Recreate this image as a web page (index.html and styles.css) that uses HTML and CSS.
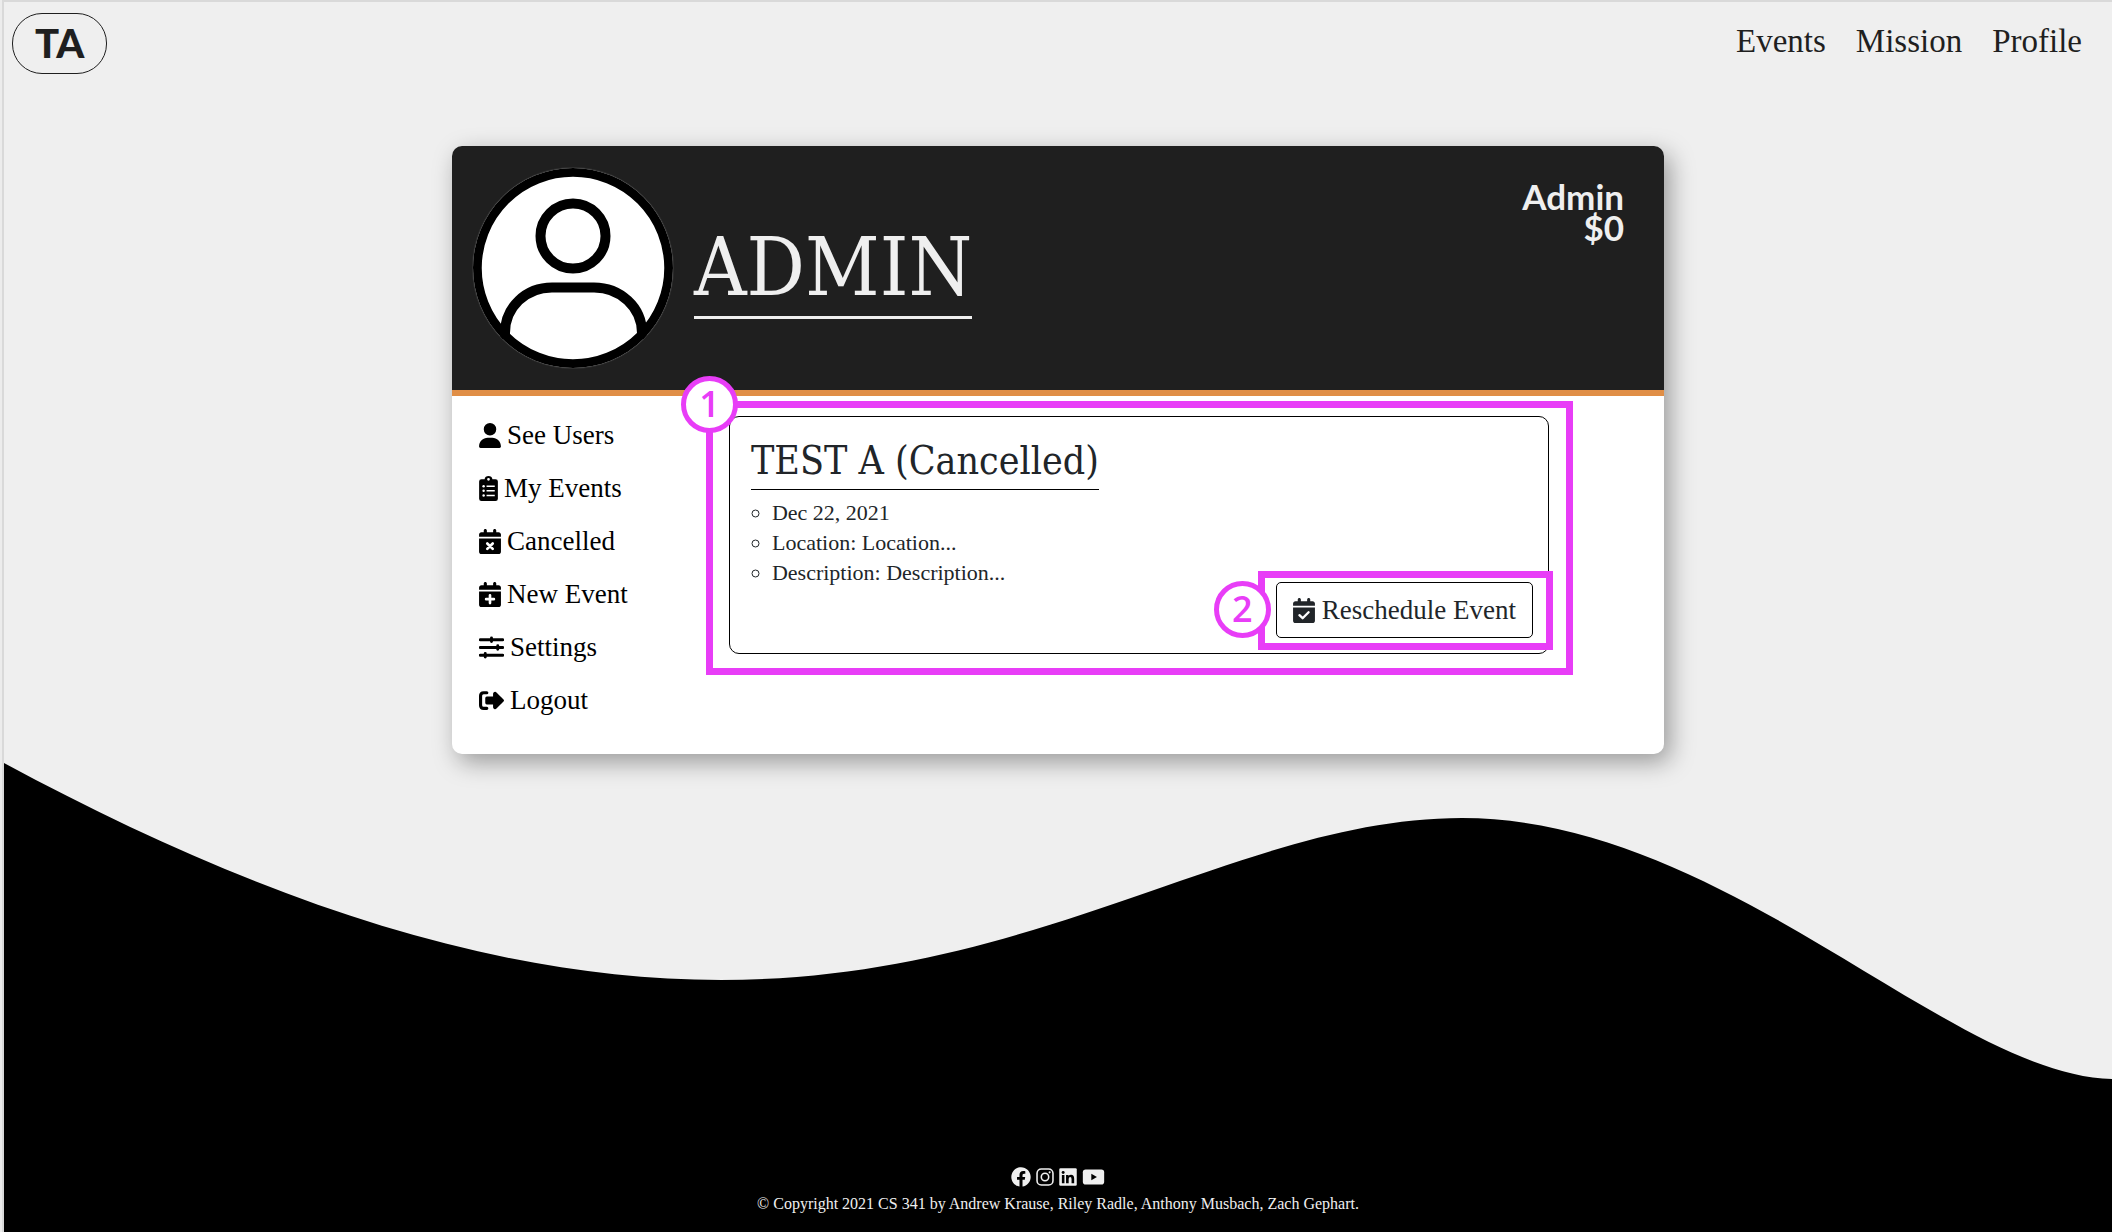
FILE: index.html
```html
<!DOCTYPE html>
<html lang="en">
<head>
<meta charset="utf-8">
<meta name="viewport" content="width=device-width, initial-scale=1">
<title>TA - Admin profile</title>
<link rel="stylesheet" href="styles.css">
</head>
<body>
<svg class="sprite" aria-hidden="true">
  <symbol id="calendar" viewBox="0 0 448 512"><path d="M128 0c17.700 0 32 14.300 32 32V64H288V32c0-17.700 14.300-32 32-32s32 14.300 32 32V64h48c26.500 0 48 21.500 48 48v48H0V112C0 85.500 21.500 64 48 64H96V32c0-17.700 14.300-32 32-32zM0 192H448V464c0 26.500-21.500 48-48 48H48c-26.500 0-48-21.500-48-48V192z"/></symbol>
</svg>
<div class="page">
  <svg class="wave" viewBox="4 763 2108 469" preserveAspectRatio="none" aria-hidden="true">
    <path d="M4 763C240 890 480 980 721 980C1040 980 1240 818 1462 818C1725 818 1950 1076 2112 1079V1232H4Z"/>
  </svg>

  <header class="topbar">
    <a class="logo" href="#">TA</a>
    <nav class="nav">
      <a href="#">Events</a>
      <a href="#">Mission</a>
      <a href="#">Profile</a>
    </nav>
  </header>

  <main class="card">
    <div class="card-head">
      <svg class="avatar" viewBox="0 0 202 202" role="img" aria-label="Profile picture">
        <clipPath id="face"><circle cx="101" cy="101" r="100"/></clipPath>
        <circle cx="101" cy="101" r="100" fill="#fff"/>
        <g fill="none" stroke="#000" clip-path="url(#face)">
          <circle cx="101" cy="69" r="32.500" stroke-width="10"/>
          <path d="M33 172V166C33 140 54 120.500 80 120.500H122C148 120.500 170 140 170 166V172" stroke-width="10"/>
          <circle cx="101" cy="101" r="96" stroke-width="9.500"/>
        </g>
        <circle cx="101" cy="101" r="100.500" fill="none" stroke="#444" stroke-width="0.500"/>
      </svg>
      <h1 class="name">ADMIN</h1>
      <div class="account">Admin<br>$0</div>
    </div>

    <div class="card-body">
      <nav class="menu">
        <a href="#"><svg class="icon w22" viewBox="0 0 448 512"><path d="M224 256A128 128 0 1 0 224 0a128 128 0 1 0 0 256zm-45.700 48C79.800 304 0 383.800 0 482.300C0 498.700 13.300 512 29.700 512H418.300c16.400 0 29.700-13.300 29.700-29.700C448 383.800 368.200 304 269.700 304H178.300z"/></svg>See Users</a>
        <a href="#"><svg class="icon w19" viewBox="0 0 384 512"><path fill-rule="evenodd" d="M48 64H112C116 26 150 0 192 0S268 26 272 64H336Q384 64 384 112V464Q384 512 336 512H48Q0 512 0 464V112Q0 64 48 64ZM192 40a28 28 0 1 0 0 56a28 28 0 1 0 0-56Z"/><path d="M152 208H320M152 304H320M152 400H320" stroke="#fff" stroke-width="30"/><g fill="#fff"><circle cx="92" cy="208" r="25"/><circle cx="92" cy="304" r="25"/><circle cx="92" cy="400" r="25"/></g></svg>My Events</a>
        <a href="#"><svg class="icon w22" viewBox="0 0 448 512"><use href="#calendar"/><path d="M168 296L280 408M280 296L168 408" stroke="#fff" stroke-width="54" stroke-linecap="round"/></svg>Cancelled</a>
        <a href="#"><svg class="icon w22" viewBox="0 0 448 512"><use href="#calendar"/><path d="M224 272V432M144 352H304" stroke="#fff" stroke-width="54" stroke-linecap="round"/></svg>New Event</a>
        <a href="#"><svg class="icon w25" viewBox="0 0 512 512"><path d="M24 96H488M24 256H488M24 416H488M256 60V132M384 220V292M128 380V452" stroke="#000" stroke-width="60" stroke-linecap="round"/></svg>Settings</a>
        <a href="#"><svg class="icon w25" viewBox="0 0 512 512"><path d="M160 96H96Q32 96 32 160V352Q32 416 96 416H160" fill="none" stroke="#000" stroke-width="64" stroke-linecap="round"/><path d="M502 234L358 90Q336 70 312 84Q288 92 288 120V176H160Q128 176 128 208V304Q128 336 160 336H288V392Q288 420 312 428Q336 442 358 422L502 278Q522 256 502 234Z"/></svg>Logout</a>
      </nav>

      <section class="event">
        <h2 class="event-title">TEST A (Cancelled)</h2>
        <div class="event-row">
          <ul class="details">
            <li>Dec 22, 2021</li>
            <li>Location: Location...</li>
            <li>Description: Description...</li>
          </ul>
          <div class="action">
            <div class="callout callout-button"><span class="badge">2</span></div>
            <button class="button" type="button"><svg class="icon w22" viewBox="0 0 448 512"><use href="#calendar"/><path d="M130 352L196 414L318 292" fill="none" stroke="#fff" stroke-width="48" stroke-linecap="round" stroke-linejoin="round"/></svg>Reschedule Event</button>
          </div>
        </div>
        <div class="callout callout-event"><span class="badge">1</span></div>
      </section>
    </div>
  </main>

  <footer class="footer">
    <div class="social">
      <a href="#" aria-label="Facebook"><svg width="20" height="20" viewBox="0 0 512 512"><path d="M504 256C504 119 393 8 256 8S8 119 8 256c0 123.780 90.690 226.380 209.250 245V327.690h-63V256h63v-54.640c0-62.150 37-96.480 93.670-96.480 27.140 0 55.520 4.840 55.520 4.840v61h-31.280c-30.800 0-40.410 19.120-40.410 38.730V256h68.780l-11 71.690h-57.780V501C413.310 482.380 504 379.780 504 256z"/></svg></a>
      <a href="#" aria-label="Instagram"><svg width="18" height="20" viewBox="0 0 448 512"><g fill="none" stroke="#efefef" stroke-width="40"><rect x="20" y="52" width="408" height="408" rx="110"/><circle cx="224" cy="256" r="95"/></g><circle cx="343" cy="137" r="27"/></svg></a>
      <a href="#" aria-label="LinkedIn"><svg width="18" height="20" viewBox="0 0 448 512"><rect y="32" width="448" height="448" rx="32"/><g fill="#000"><circle cx="100" cy="139" r="38"/><path d="M67 202H133V416H67ZM174 202H238V231Q258 197 302 197Q382 197 382 298V416H315V312Q315 256 281 256Q241 256 241 310V416H174Z"/></g></svg></a>
      <a href="#" aria-label="YouTube"><svg width="23" height="20" viewBox="0 0 576 512"><rect x="15" y="64" width="546" height="384" rx="72"/><path d="M232 175L376 256L232 338Z" fill="#000"/></svg></a>
    </div>
    <p class="copyright">© Copyright 2021 CS 341 by Andrew Krause, Riley Radle, Anthony Musbach, Zach Gephart.</p>
  </footer>
</div>
</body>
</html>
```
FILE: styles.css
```css
* { box-sizing: border-box; }

body {
  margin: 0;
  background: linear-gradient(to right, #ececec 2px, #d9d9d9 2px 4px, #fff 4px);
  color: #212529;
  font-family: "Liberation Serif", serif;
}

a { color: inherit; text-decoration: none; }
.sprite { display: none; }

.page {
  position: relative;
  display: flex;
  flex-direction: column;
  min-height: 100vh;
  margin: 0 4px;
  border-top: 2px solid #d9d9d9;
  background: #efefef;
}

.wave {
  position: absolute;
  left: 0;
  bottom: 0;
  width: 100%;
  height: 469px;
}

.topbar {
  display: flex;
  justify-content: space-between;
  align-items: flex-start;
  padding: 11px 30px 0 8px;
  color: #1f1f1f;
}

.logo {
  padding: 0 22px;
  border: 1px solid #1f1f1f;
  border-radius: 30px;
  font: 900 40px/59px Lato, sans-serif;
}

.nav {
  display: flex;
  gap: 30px;
  padding-top: 10px;
  font-size: 33px;
  line-height: 36px;
}

.card {
  position: relative;
  width: 57.5%;
  margin: 72px auto 0;
  border-radius: 10px;
  background: #fff;
  box-shadow: 6px 8px 24px rgba(0, 0, 0, 0.36);
}

.card-head {
  display: flex;
  gap: 20px;
  padding: 20px 40px 20px 20px;
  border-bottom: 6px solid #e08e46;
  border-radius: 10px 10px 0 0;
  background: #1f1f1f;
  color: #efefef;
}

.avatar { width: 202px; height: 202px; margin: 1px 0; }

.name {
  align-self: center;
  margin: 0;
  border-bottom: 3px solid #efefef;
  font: 400 81px/98px "DejaVu Serif Condensed", "DejaVu Serif", serif;
}

.account {
  margin-left: auto;
  padding-top: 15px;
  text-align: right;
  font: 700 35px/31px Lato, sans-serif;
}

.card-body {
  display: flex;
  align-items: flex-start;
  padding: 20px 115px 20px 27px;
}

.menu { display: flex; flex-direction: column; width: 250px; color: #000; }

.menu a {
  display: flex;
  align-items: center;
  gap: 6px;
  height: 52px;
  margin-bottom: 1px;
  padding-bottom: 14px;
  font-size: 27px;
  line-height: 30px;
}

.icon { height: 25px; fill: currentColor; flex: none; }
.w19 { width: 19px; }
.w22 { width: 22px; }
.w25 { width: 25px; }

.event {
  position: relative;
  display: flex;
  flex: 1;
  flex-direction: column;
  min-height: 238px;
  padding: 21px 15px 15px 21px;
  border: 1px solid #000;
  border-radius: 10px;
}

.event-title {
  align-self: flex-start;
  margin: 0;
  padding-bottom: 5px;
  border-bottom: 1px solid #000;
  font: 400 39px/46px "DejaVu Serif Condensed", "DejaVu Serif", serif;
}

.event-row {
  display: flex;
  flex: 1;
  justify-content: space-between;
}

.details {
  margin: 8px 0 0;
  padding-left: 21px;
  list-style: circle;
  font-size: 22px;
  line-height: 30px;
}

.action { position: relative; align-self: flex-end; }

.button {
  position: relative;
  display: flex;
  align-items: center;
  gap: 7px;
  height: 56px;
  padding: 0 16px;
  border: 1px solid #000;
  border-radius: 5px;
  background: #fff;
  color: #212529;
  font: 27px/30px "Liberation Serif", serif;
}

.callout { position: absolute; border: 7px solid #e83df7; }
.callout-event { inset: -16px -25px -22px -24px; }
.callout-button { inset: -11px -20px -12px -18px; }

.badge {
  position: absolute;
  width: 57px;
  height: 57px;
  border: 5px solid #e83df7;
  border-radius: 50%;
  background: #fff;
  color: #e83df7;
  text-align: center;
  font: 600 36px/46px "Open Sans", sans-serif;
}

.callout-event .badge { left: -32px; top: -32px; }
.callout-button .badge { left: -51px; top: 3px; }

.footer {
  position: relative;
  display: flex;
  flex-direction: column;
  align-items: center;
  gap: 7px;
  margin-top: auto;
  padding-bottom: 18px;
  color: #efefef;
}

.social { display: flex; gap: 5px; fill: currentColor; }
.social svg { display: block; }
.copyright { margin: 0; font-size: 16px; line-height: 20px; }
```
